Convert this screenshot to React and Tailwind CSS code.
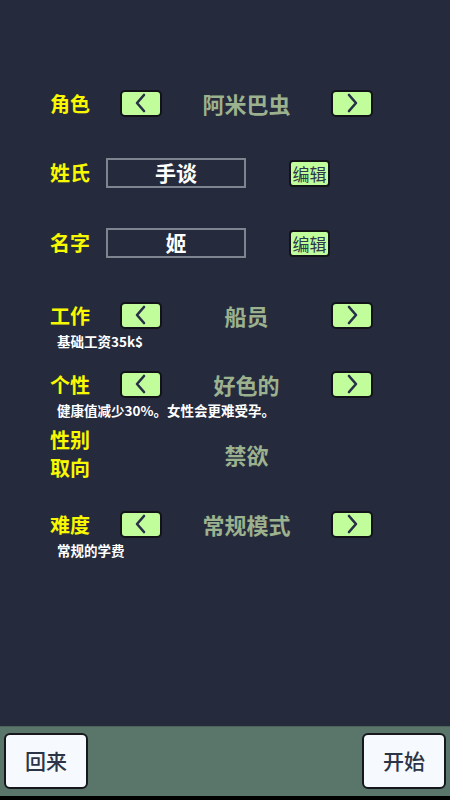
import React, { useState } from "react";

const font = { fontFamily: '"Noto Sans CJK SC", "Noto Sans", sans-serif' };

const Arrow = ({ dir, onClick }) => (
  <button
    onClick={onClick}
    className="w-[42px] h-[27px] shrink-0 flex items-center justify-center bg-[#c2fd9c] border-2 border-[#111318] rounded-[5px]"
  >
    <svg width="14" height="20" viewBox="0 0 14 20">
      <polyline
        points={dir === "left" ? "10,2 3,10 10,18" : "4,2 11,10 4,18"}
        fill="none"
        stroke="#283048"
        strokeWidth="2.6"
        strokeLinecap="round"
        strokeLinejoin="round"
      />
    </svg>
  </button>
);

const Label = ({ children }) => (
  <div className="w-[70px] shrink-0 text-[20px] leading-[25px] font-bold text-[#f8f800]">{children}</div>
);

const Picker = ({ label, value, onPrev, onNext }) => (
  <div className="flex items-center h-[30px]">
    <Label>{label}</Label>
    <Arrow dir="left" onClick={onPrev} />
    <div className="flex-1 text-center text-[22px] font-bold text-[#9cb18e]">{value}</div>
    <Arrow dir="right" onClick={onNext} />
  </div>
);

const NameField = ({ label, value }) => (
  <div className="flex items-center h-[30px]">
    <div className="w-[56px] shrink-0 text-[20px] font-bold text-[#f8f800]">{label}</div>
    <div className="w-[140px] h-[30px] flex items-center justify-center border-2 border-[#7f8590] text-[21px] font-bold text-white">
      {value}
    </div>
    <button className="ml-[43px] w-[41px] h-[27px] flex items-center justify-center bg-[#c2fd9c] border-2 border-[#111318] rounded-[4px] text-[17px] leading-none text-[#2e384c]">
      编辑
    </button>
  </div>
);

const Note = ({ children }) => (
  <div className="mt-[3px] h-[16px] pl-[7px] text-[13.5px] leading-[16px] font-bold text-white">{children}</div>
);

const roles = ["阿米巴虫", "人类", "精灵"];
const jobs = [
  { name: "船员", note: "基础工资35k$" },
  { name: "商人", note: "基础工资50k$" },
];
const traits = [
  { name: "好色的", note: "健康值减少30%。女性会更难受孕。" },
  { name: "勤奋的", note: "工作效率提高10%。" },
];
const modes = [
  { name: "常规模式", note: "常规的学费" },
  { name: "困难模式", note: "双倍的学费" },
];

export default function App() {
  const [role, setRole] = useState(0);
  const [job, setJob] = useState(0);
  const [trait, setTrait] = useState(0);
  const [mode, setMode] = useState(0);

  const step = (set, len, d) => set((i) => (i + d + len) % len);

  return (
    <div className="min-h-screen flex flex-col bg-[#252b3d]" style={font}>
      <div className="flex-1 flex flex-col pt-[88px] pl-[50px] pr-[77px]">
        <Picker
          label="角色"
          value={roles[role]}
          onPrev={() => step(setRole, roles.length, -1)}
          onNext={() => step(setRole, roles.length, 1)}
        />

        <div className="mt-[40px]">
          <NameField label="姓氏" value="手谈" />
        </div>
        <div className="mt-[40px]">
          <NameField label="名字" value="姬" />
        </div>

        <div className="mt-[42px]">
          <Picker
            label="工作"
            value={jobs[job].name}
            onPrev={() => step(setJob, jobs.length, -1)}
            onNext={() => step(setJob, jobs.length, 1)}
          />
          <Note>{jobs[job].note}</Note>
        </div>

        <div className="mt-[20px]">
          <Picker
            label="个性"
            value={traits[trait].name}
            onPrev={() => step(setTrait, traits.length, -1)}
            onNext={() => step(setTrait, traits.length, 1)}
          />
          <Note>{traits[trait].note}</Note>
        </div>

        {/* orientation has no picker, only the value */}
        <div className="mt-[8px] flex items-center h-[56px]">
          <div className="w-[70px] shrink-0 text-[20px] leading-[28px] font-bold text-[#f8f800]">
            <div>性别</div>
            <div>取向</div>
          </div>
          <div className="w-[42px] shrink-0" />
          <div className="flex-1 text-center text-[22px] font-bold text-[#9cb18e]">禁欲</div>
          <div className="w-[42px] shrink-0" />
        </div>

        <div className="mt-[27px]">
          <Picker
            label="难度"
            value={modes[mode].name}
            onPrev={() => step(setMode, modes.length, -1)}
            onNext={() => step(setMode, modes.length, 1)}
          />
          <Note>{modes[mode].note}</Note>
        </div>
      </div>

      <div className="h-[74px] shrink-0 flex items-center justify-between px-[4px] pt-[1px] pb-[2px] bg-[#5a7569] border-t border-[#4d6358] border-b-4 border-b-black">
        <button className="w-[84px] h-[56px] bg-[#f6f9fd] border-2 border-[#15171c] rounded-[6px] text-[21px] font-medium text-[#2b3447]">
          回来
        </button>
        <button className="w-[84px] h-[56px] bg-[#f6f9fd] border-2 border-[#15171c] rounded-[6px] text-[21px] font-medium text-[#2b3447]">
          开始
        </button>
      </div>
    </div>
  );
}
